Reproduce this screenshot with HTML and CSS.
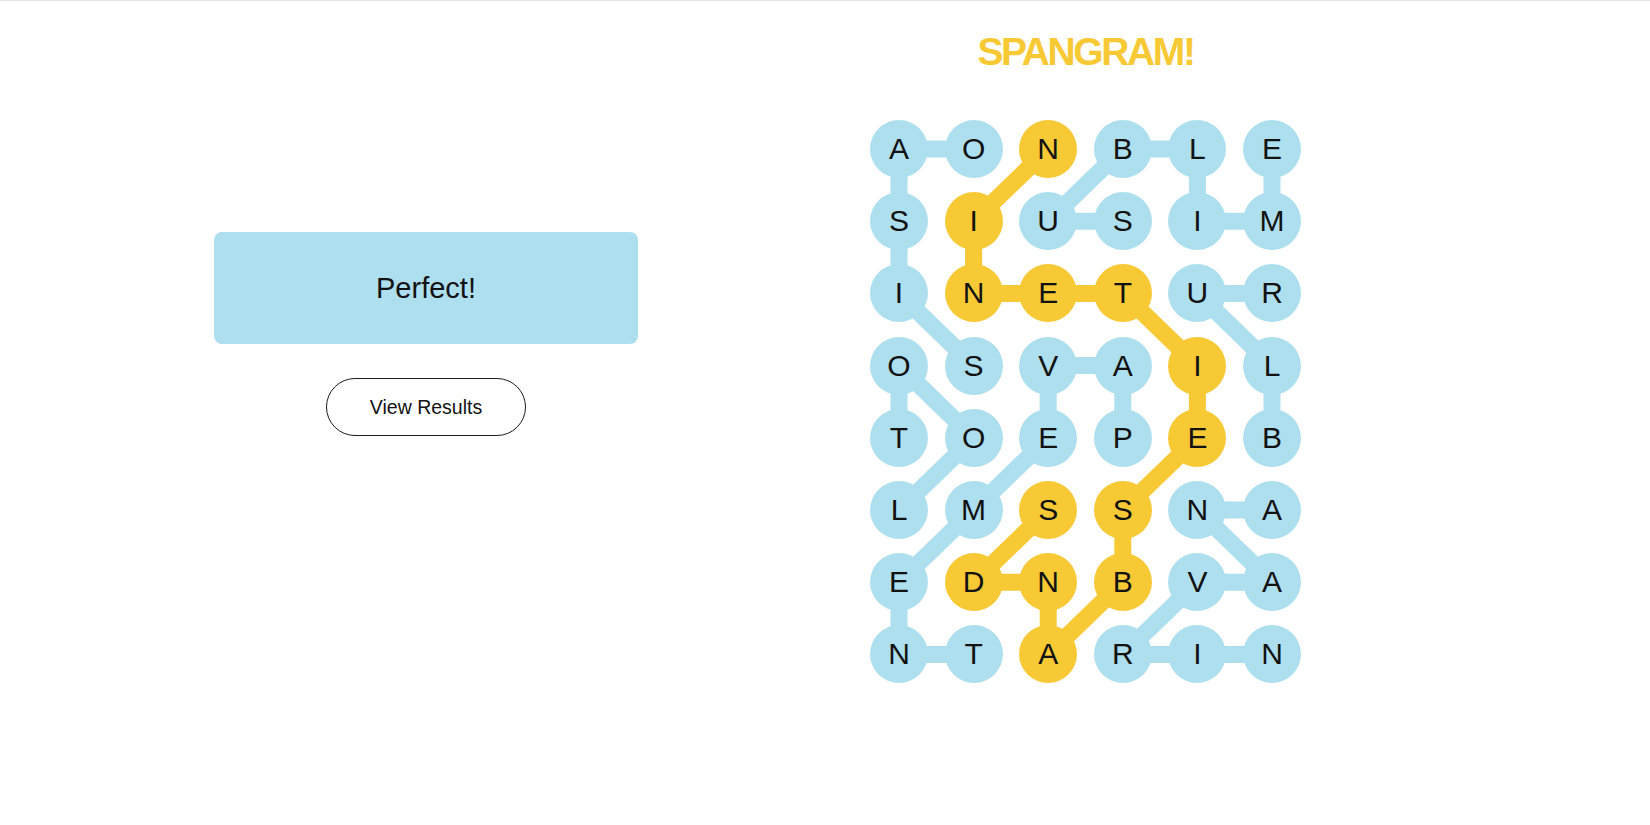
FILE: index.html
```html
<!DOCTYPE html>
<html lang="en">
<head>
<meta charset="utf-8">
<title>Strands</title>
<link rel="stylesheet" href="styles.css">
</head>
<body>
<div class="page">
  <section class="left">
    <div class="result-box">Perfect!</div>
    <button class="results-btn" type="button">View Results</button>
  </section>
  <section class="right">
    <h1 class="spangram-title">SPANGRAM!</h1>
    <div class="board">
      <svg class="links" viewBox="0 0 431 563.4" width="431" height="563.4" aria-hidden="true">
        <g class="blue">
          <polyline points="103.6,29 29,29 29,101.2 29,173.4 103.6,245.6"/>
          <polyline points="252.8,101.2 178.2,101.2 252.8,29 327.4,29 327.4,101.2 402,101.2 402,29"/>
          <polyline points="402,317.8 402,245.6 327.4,173.4 402,173.4"/>
          <polyline points="29,317.8 29,245.6 103.6,317.8 29,390"/>
          <polyline points="252.8,317.8 252.8,245.6 178.2,245.6 178.2,317.8 103.6,390 29,462.2 29,534.4 103.6,534.4"/>
          <polyline points="402,534.4 327.4,534.4 252.8,534.4 327.4,462.2 402,462.2 327.4,390 402,390"/>
        </g>
        <g class="yellow">
          <polyline points="178.2,29 103.6,101.2 103.6,173.4 178.2,173.4 252.8,173.4 327.4,245.6 327.4,317.8 252.8,390 252.8,462.2 178.2,534.4 178.2,462.2 103.6,462.2 178.2,390"/>
        </g>
      </svg>
      <div class="cell">A</div><div class="cell">O</div><div class="cell gold">N</div><div class="cell">B</div><div class="cell">L</div><div class="cell">E</div>
      <div class="cell">S</div><div class="cell gold">I</div><div class="cell">U</div><div class="cell">S</div><div class="cell">I</div><div class="cell">M</div>
      <div class="cell">I</div><div class="cell gold">N</div><div class="cell gold">E</div><div class="cell gold">T</div><div class="cell">U</div><div class="cell">R</div>
      <div class="cell">O</div><div class="cell">S</div><div class="cell">V</div><div class="cell">A</div><div class="cell gold">I</div><div class="cell">L</div>
      <div class="cell">T</div><div class="cell">O</div><div class="cell">E</div><div class="cell">P</div><div class="cell gold">E</div><div class="cell">B</div>
      <div class="cell">L</div><div class="cell">M</div><div class="cell gold">S</div><div class="cell gold">S</div><div class="cell">N</div><div class="cell">A</div>
      <div class="cell">E</div><div class="cell gold">D</div><div class="cell gold">N</div><div class="cell gold">B</div><div class="cell">V</div><div class="cell">A</div>
      <div class="cell">N</div><div class="cell">T</div><div class="cell gold">A</div><div class="cell">R</div><div class="cell">I</div><div class="cell">N</div>
    </div>
  </section>
</div>
</body>
</html>
```
FILE: styles.css
```css
html, body {
  margin: 0;
  padding: 0;
  background: #ffffff;
}

body {
  font-family: "Liberation Sans", Arial, sans-serif;
  color: #121212;
}

.page {
  border-top: 1px solid #e3e3e3;
  height: 824px;
  display: flex;
  flex-direction: row;
}

.left {
  flex: 0 0 852px;
  display: flex;
  flex-direction: column;
  align-items: center;
  padding-top: 231px;
  box-sizing: border-box;
}

.result-box {
  width: 424px;
  height: 112px;
  background: #aedfee;
  border-radius: 8px;
  display: flex;
  align-items: center;
  justify-content: center;
  font-size: 29px;
  color: #121212;
}

.results-btn {
  margin-top: 34px;
  width: 200px;
  height: 58px;
  border: 1px solid #1c1c1c;
  border-radius: 29px;
  background: #ffffff;
  font-family: "Liberation Sans", Arial, sans-serif;
  font-size: 19.5px;
  color: #121212;
  padding: 0;
  cursor: pointer;
}

.right {
  flex: 0 0 467px;
  display: flex;
  flex-direction: column;
  align-items: center;
}

.spangram-title {
  margin: 31px 0 0;
  font-family: "Liberation Sans", Arial, sans-serif;
  font-size: 39px;
  line-height: 40px;
  font-weight: 700;
  letter-spacing: -2.4px;
  color: #f7c935;
}

.board {
  margin-top: 48px;
  position: relative;
  display: grid;
  grid-template-columns: repeat(6, 58px);
  grid-auto-rows: 58px;
  column-gap: 16.6px;
  row-gap: 14.2px;
}

.links {
  position: absolute;
  left: 0;
  top: 0;
  z-index: 0;
}

.links polyline {
  fill: none;
  stroke-width: 17;
  stroke-linejoin: round;
  stroke-linecap: round;
}

.links .blue polyline {
  stroke: #aedfee;
}

.links .yellow polyline {
  stroke: #f7c935;
}

.cell {
  position: relative;
  z-index: 1;
  width: 58px;
  height: 58px;
  border-radius: 50%;
  background: #aedfee;
  display: flex;
  align-items: center;
  justify-content: center;
  font-size: 30px;
  color: #121212;
}

.cell.gold {
  background: #f7c935;
}
```
